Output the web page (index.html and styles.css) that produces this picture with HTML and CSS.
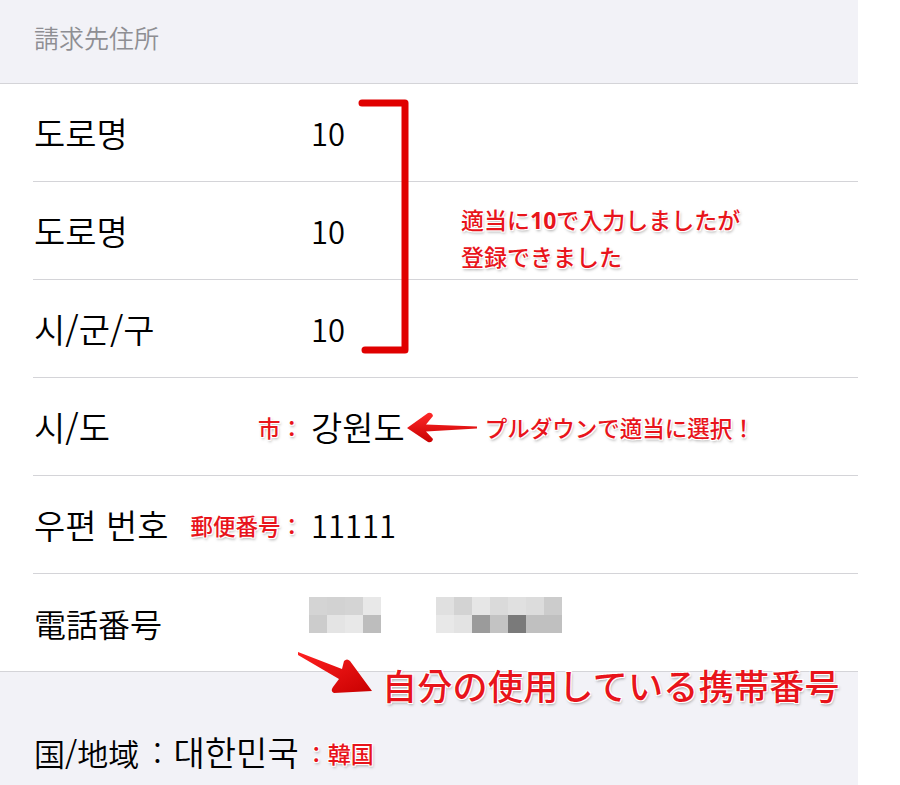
FILE: index.html
```html
<!DOCTYPE html>
<html lang="ko">
<head>
    <meta charset="UTF-8">
    <meta name="viewport" content="width=device-width, initial-scale=1.0">
    <title>請求先住所</title>
    <link rel="stylesheet" href="styles.css">
</head>
<body>
    <div class="page">
        <!-- Section header -->
        <div class="section-head">請求先住所</div>

        <div class="list">
            <div class="row">
                <div class="row-inner">
                    <div class="label">도로명</div>
                    <div class="value">10</div>
                </div>
            </div>
            <div class="row">
                <div class="row-inner">
                    <div class="label">도로명</div>
                    <div class="value">10</div>
                </div>
            </div>
            <div class="row">
                <div class="row-inner">
                    <div class="label">시/군/구</div>
                    <div class="value">10</div>
                </div>
            </div>
            <div class="row">
                <div class="row-inner">
                    <div class="label">시/도<span class="note note-label">市：</span></div>
                    <div class="value"><span class="hangul">강원도</span>
                        <svg class="arrow-left" width="74" height="34" viewBox="0 0 74 34">
                            <defs>
                                <linearGradient id="redGrad" x1="0" y1="0" x2="0" y2="1">
                                    <stop offset="0" stop-color="#ff2a2a"/>
                                    <stop offset="1" stop-color="#c80000"/>
                                </linearGradient>
                            </defs>
                            <path d="M2 18 L23 3 Q27 2 28 6 L21 14.5 L72 16.5 L72 18.5 L21 21.5 L28 29 Q27 33 23 32 Z" fill="url(#redGrad)"/>
                        </svg>
                        <span class="note note-pull">プルダウンで適当に選択！</span>
                    </div>
                </div>
            </div>
            <div class="row">
                <div class="row-inner">
                    <div class="label">우편 번호<span class="note note-label">郵便番号：</span></div>
                    <div class="value">11111</div>
                </div>
            </div>
            <div class="row row-last">
                <div class="row-inner">
                    <div class="label label-jp">電話番号</div>
                    <div class="value phone">
                        <div class="mosaic mosaic-a">
                            <i style="background:#d4d4d4"></i><i style="background:#d2d2d2"></i><i style="background:#d4d4d4"></i><i style="background:#e8e8e8"></i>
                            <i style="background:#cccccc"></i><i style="background:#e4e4e4"></i><i style="background:#e8e8e8"></i><i style="background:#bdbdbd"></i>
                        </div>
                        <div class="mosaic mosaic-b">
                            <i style="background:#e0e0e0"></i><i style="background:#d3d3d3"></i><i style="background:#e6e6e6"></i><i style="background:#dadada"></i><i style="background:#e0e0e0"></i><i style="background:#dcdcdc"></i><i style="background:#cccccc"></i>
                            <i style="background:#e8e8e8"></i><i style="background:#e3e3e3"></i><i style="background:#9b9b9b"></i><i style="background:#c3c3c3"></i><i style="background:#7a7a7a"></i><i style="background:#c0c0c0"></i><i style="background:#c0c0c0"></i>
                        </div>
                    </div>
                </div>
            </div>

            <!-- bracket over the first three rows -->
            <svg class="bracket" width="56" height="260" viewBox="0 0 56 260">
                <path d="M4 4 H47 V251 H7" fill="none" stroke="#e00000" stroke-width="7" stroke-linecap="round" stroke-linejoin="round"/>
            </svg>
            <div class="note note-input">適当に<b>10</b>で入力しましたが<br>登録できました</div>
        </div>

        <div class="section-foot">国/地域<span class="colon">:</span><span class="hangul">대한민국</span><span class="note note-korea">：韓国</span></div>

        <!-- annotation for the phone number -->
        <svg class="arrow-diag" width="80" height="48" viewBox="0 0 80 48">
            <defs>
                <linearGradient id="redGrad2" x1="0" y1="0" x2="1" y2="1">
                    <stop offset="0" stop-color="#ff2020"/>
                    <stop offset="1" stop-color="#c80000"/>
                </linearGradient>
            </defs>
            <path d="M2 3 L46 20 L48 12 Q51 9 54 12 L76 42 L38 44 Q34 42 37 38 L43 30 L2 6 Z" fill="url(#redGrad2)"/>
        </svg>
        <div class="note note-big">自分の使用している携帯番号</div>
    </div>
</body>
</html>
```

FILE: styles.css
```css
/* Base */
* {
    margin: 0;
    padding: 0;
    box-sizing: border-box;
}
body {
    background: #fff;
    color: #000;
    font-family: "Noto Sans CJK KR", "Noto Sans CJK JP", sans-serif;
}

.page {
    position: relative;
    width: 858px;
}

/* Section header */
.section-head {
    height: 84px;
    padding: 0 34px 9px;
    display: flex;
    align-items: center;
    background: #f2f2f7;
    border-bottom: 1px solid #d4d4d8;
    color: #8e8e93;
    font-family: "Noto Sans CJK JP", sans-serif;
    font-size: 25px;
    font-weight: 350;
}

/* List rows */
.list {
    position: relative;
    border-bottom: 1px solid #d4d4d8;
}
.row {
    padding-left: 33px;
}
.row-inner {
    height: 98px;
    display: flex;
    align-items: center;
    border-bottom: 1px solid #d4d4d8;
}
.row-last .row-inner {
    height: 97px;
    border-bottom: none;
}
.label {
    width: 278px;
    padding-left: 1px;
    padding-right: 8px;
    display: flex;
    align-items: center;
    justify-content: space-between;
    font-size: 34px;
    font-weight: 350;
}
.label-jp {
    font-family: "Noto Sans CJK JP", sans-serif;
    font-size: 32px;
}
.value {
    display: flex;
    align-items: center;
    font-size: 31px;
    font-weight: 350;
}
.hangul {
    font-family: "Noto Sans CJK KR", sans-serif;
    font-size: 34px;
}

/* Red notes written on top of the screenshot */
.note {
    color: #e8141b;
    font-family: "Noto Sans CJK JP", sans-serif;
    font-size: 23px;
    font-weight: 500;
    text-shadow: 0 0 2px #fff, 1px 1px 0 #fff, -1px -1px 0 #fff, 1px -1px 0 #fff, -1px 1px 0 #fff, 1px 2px 3px rgba(0, 0, 0, 0.35);
}
.note-label {
    font-size: 22.5px;
}
.arrow-left {
    margin: 0 6px 0 0;
}
.note-pull {
    font-size: 22.5px;
}
.note-input {
    position: absolute;
    left: 461px;
    top: 117px;
    line-height: 36px;
    font-size: 23px;
}
.note-input b {
    font-family: "Noto Sans", sans-serif;
    font-weight: 700;
}
.bracket {
    position: absolute;
    left: 358px;
    top: 15px;
}

/* Blurred phone number */
.phone {
    margin-left: -2px;
    margin-bottom: 15px;
    gap: 55px;
}
.mosaic {
    display: grid;
    grid-auto-rows: 18px;
    grid-template-columns: repeat(4, 18px);
}
.mosaic-b {
    grid-template-columns: repeat(7, 18px);
}

/* Footer section */
.section-foot {
    height: 113px;
    padding: 59px 34px 0;
    background: #f2f2f7;
    font-family: "Noto Sans CJK JP", "Noto Sans CJK KR", sans-serif;
    font-size: 31px;
    font-weight: 350;
    line-height: 42px;
}
.colon {
    margin: 0 12px 0 14px;
}
.note-korea {
    margin-left: 6px;
    font-size: 23px;
    vertical-align: 3px;
}

.arrow-diag {
    position: absolute;
    left: 296px;
    top: 649px;
}
.note-big {
    position: absolute;
    left: 382px;
    top: 659px;
    font-size: 35px;
    font-weight: 500;
    letter-spacing: 0.3px;
}
```
